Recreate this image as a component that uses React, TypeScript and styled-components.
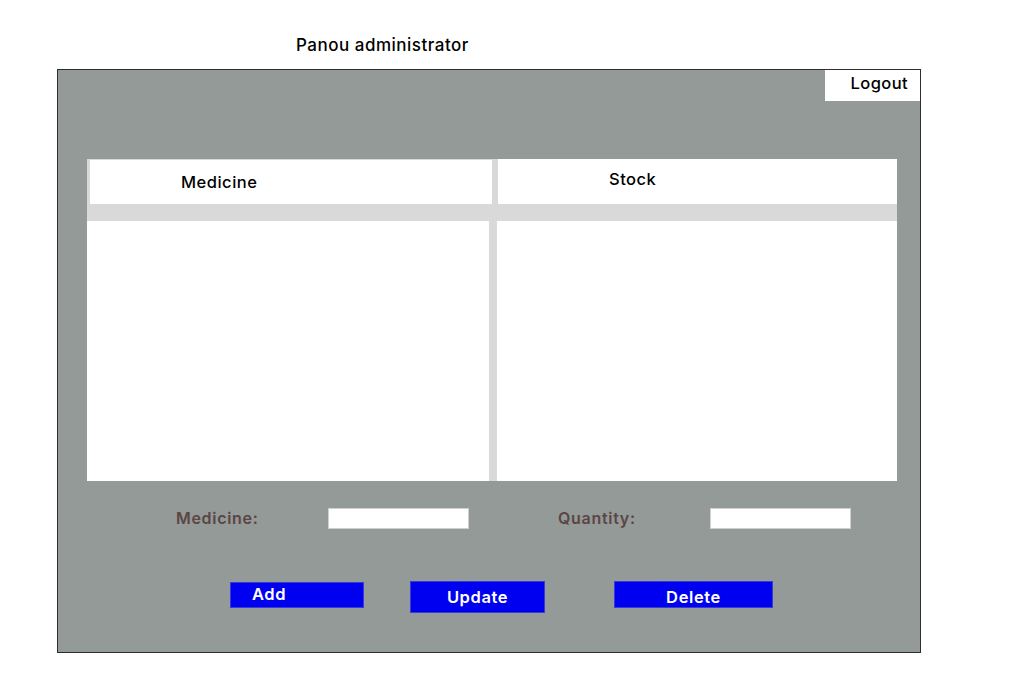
import styled, { createGlobalStyle } from "styled-components";

const GlobalStyle = createGlobalStyle`
  body {
    margin: 0;
    background: #ffffff;
    font-family: "Inter", "Open Sans", sans-serif;
  }
  * {
    box-sizing: border-box;
  }
`;

const Page = styled.div`
  width: 1017px;
  height: 695px;
  padding-left: 57px;
`;

const Title = styled.h1`
  margin: 0;
  padding: 35px 0 0 239px;
  height: 69px;
  font-size: 17px;
  letter-spacing: 0.5px;
  line-height: 20px;
  font-weight: 500;
  color: #000;
`;

const Panel = styled.div`
  width: 864px;
  height: 584px;
  border: 1px solid #2e2e2e;
  background: #939a98;
  display: flex;
  flex-direction: column;
`;

const TopBar = styled.div`
  display: flex;
  justify-content: flex-end;
  height: 31px;
`;

const LogoutButton = styled.button`
  width: 95px;
  height: 31px;
  border: none;
  background: #ffffff;
  font-family: inherit;
  font-size: 16.5px;
  letter-spacing: 0.4px;
  font-weight: 500;
  color: #000;
  text-align: right;
  padding: 0 12px 5px 0;
  cursor: pointer;
`;

const Table = styled.div`
  margin: 58px 0 0 29px;
  width: 810px;
  height: 322px;
  background: #d9d9d9;
  display: flex;
  flex-direction: column;
`;

const HeaderRow = styled.div`
  display: flex;
  gap: 6px;
  height: 45px;
  padding-left: 3px;
`;

const HeaderCell = styled.div<{ $pad: number; $top: number; $w: number }>`
  width: ${(p) => p.$w}px;
  margin-top: ${(p) => p.$top}px;
  background: #ffffff;
  display: flex;
  align-items: center;
  padding-left: ${(p) => p.$pad}px;
  padding-bottom: ${(p) => (p.$top ? 0 : 5)}px;
  font-size: 16.5px;
  letter-spacing: 0.5px;
  font-weight: 500;
  color: #000;
`;

const Band = styled.div`
  height: 17px;
`;

const BodyRow = styled.div`
  display: flex;
  gap: 8px;
  flex: 1;
`;

const BodyCell = styled.div<{ $w: number }>`
  width: ${(p) => p.$w}px;
  background: #ffffff;
`;

const FormRow = styled.div`
  display: flex;
  align-items: center;
  margin-top: 27px;
  padding-left: 118px;
  height: 21px;
`;

const Label = styled.label`
  width: 152px;
  font-size: 16px;
  letter-spacing: 0.7px;
  font-weight: 600;
  color: #5b4545;
  padding-bottom: 2px;
`;

const Input = styled.input<{ $after?: number }>`
  width: 141px;
  height: 21px;
  border: 1px solid #cfcfcf;
  background: #ffffff;
  margin-right: ${(p) => p.$after ?? 0}px;
  padding: 0 4px;
  outline: none;
`;

const ButtonRow = styled.div`
  display: flex;
  align-items: flex-start;
  margin-top: 52px;
  padding-left: 172px;
`;

const ActionButton = styled.button<{
  $w: number;
  $h: number;
  $top: number;
  $after: number;
  $align: "left" | "center";
  $shift: number;
}>`
  width: ${(p) => p.$w}px;
  height: ${(p) => p.$h}px;
  margin-top: ${(p) => p.$top}px;
  margin-right: ${(p) => p.$after}px;
  background: #0000f0;
  border: 1px solid #3a3ad8;
  color: #ffffff;
  font-family: inherit;
  font-size: 16.5px;
  letter-spacing: 0.6px;
  font-weight: 600;
  text-align: ${(p) => p.$align};
  padding: ${(p) => (p.$shift >= 0 ? `${p.$shift}px 0 0` : `0 0 ${-p.$shift}px`)};
  padding-left: ${(p) => (p.$align === "left" ? "21px" : "0")};
  cursor: pointer;
`;

export default function App() {
  return (
    <>
      <GlobalStyle />
      <Page>
        <Title>Panou administrator</Title>
        <Panel>
          <TopBar>
            <LogoutButton>Logout</LogoutButton>
          </TopBar>
          <Table>
            <HeaderRow>
              <HeaderCell $w={402} $top={1} $pad={91}>
                Medicine
              </HeaderCell>
              <HeaderCell $w={399} $top={0} $pad={111}>
                Stock
              </HeaderCell>
            </HeaderRow>
            <Band />
            <BodyRow>
              <BodyCell $w={402} />
              <BodyCell $w={400} />
            </BodyRow>
          </Table>
          <FormRow>
            <Label>Medicine:</Label>
            <Input $after={89} />
            <Label>Quantity:</Label>
            <Input />
          </FormRow>
          <ButtonRow>
            <ActionButton $w={134} $h={26} $top={1} $after={46} $align="left" $shift={-3}>
              Add
            </ActionButton>
            <ActionButton $w={135} $h={32} $top={0} $after={69} $align="center" $shift={0}>
              Update
            </ActionButton>
            <ActionButton $w={159} $h={27} $top={0} $after={0} $align="center" $shift={5}>
              Delete
            </ActionButton>
          </ButtonRow>
        </Panel>
      </Page>
    </>
  );
}
